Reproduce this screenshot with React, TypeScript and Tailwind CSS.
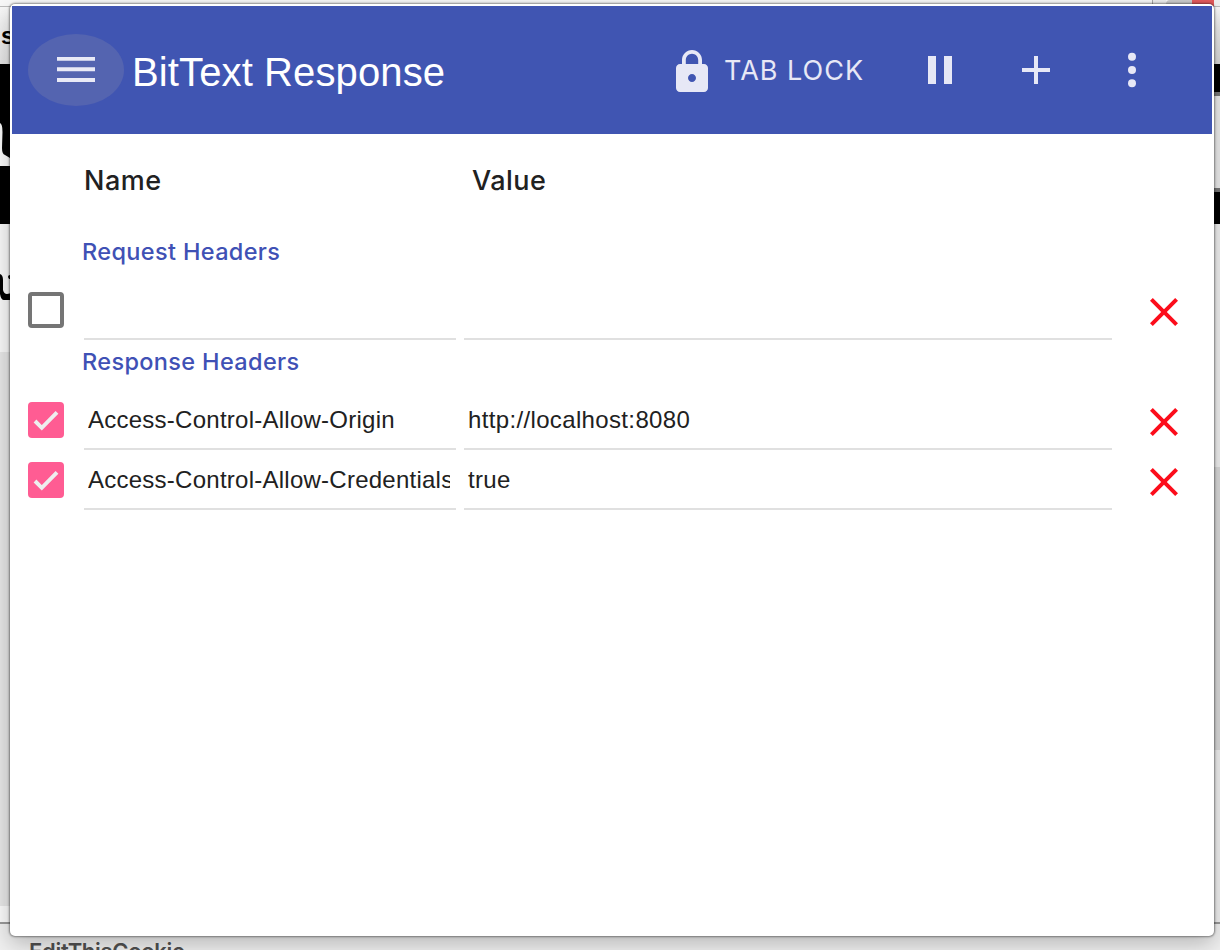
import type { ReactNode } from "react";

const response = [
  { name: "Access-Control-Allow-Origin", value: "http://localhost:8080" },
  { name: "Access-Control-Allow-Credentials", value: "true" },
];

function Backdrop() {
  return (
    <div className="flex h-full flex-col bg-[#e6e6e6]">
      <div className="flex h-[7px] shrink-0 justify-end border-b border-[#bdbdbd] bg-[#f8f8f8]">
        <div className="w-[14px] border-l border-[#a8a8a8] bg-[#eeeeee]" />
        <div className="w-[26px] rounded-tl bg-[#cccccc]" />
        <div className="w-[22px] bg-[#e25a5c]" />
        <div className="w-[6px] bg-[#f0f0f0]" />
      </div>
      <div className="flex flex-1 justify-between">
        <div className="flex w-5 flex-col">
          <div className="h-[57px] overflow-hidden bg-linear-to-b from-[#f8f8f8] to-[#e4e4e4] pl-px pt-[14px] font-['Liberation_Sans'] text-[24px] font-bold leading-[30px] text-black">
            s
          </div>
          <svg className="h-[160px] w-5" viewBox="0 0 20 160">
            <path d="M0 0H20V160H0Z" fill="#000" />
            <path d="M0 59Q2.500 60 2.500 68L2 84Q2 90 5 91L10 94H20V102H0Z" fill="#f8f8f8" />
          </svg>
          <svg className="h-[128px] w-5 bg-[#f8f8f8]" viewBox="0 0 20 128">
            <path d="M0 50Q3 51 3 56L3 66Q4 70 7 70L12 69V76H4Q1 76 0 70ZM8 53Q8 51 10 51H12V55H9Z" fill="#000" />
          </svg>
          <div className="h-[554px] bg-[#e6e6e6]" />
          <div className="flex-1 bg-[#fafafa]" />
        </div>
        <div className="flex w-5 flex-col">
          <div className="h-[57px] bg-linear-to-b from-[#f8f8f8] to-[#d8d8d8]" />
          <div className="h-7 bg-black" />
          <div className="h-1 bg-[#777777]" />
          <div className="h-[92px] bg-[#ececec]" />
          <div className="h-1 bg-[#777777]" />
          <div className="h-8 bg-black" />
          <div className="h-[243px] bg-[#f0f0f0]" />
          <div className="h-[283px] bg-[#dadada]" />
          <div className="flex-1 bg-[#f0f0f0]" />
        </div>
      </div>
      <div className="h-[28px] shrink-0 overflow-hidden border-t-2 border-[#999999] bg-[#f0f0f0] pl-[29px] pt-[13px] font-['Inter'] text-[22px] font-semibold leading-[28px] tracking-[-0.3px] text-[#505050]">
        EditThisCookie
      </div>
    </div>
  );
}

function IconButton({ label, children }: { label: string; children: ReactNode }) {
  return (
    <button aria-label={label} className="flex h-[72px] w-24 items-center justify-center rounded-[50%]">
      <svg className="size-12" viewBox="0 0 24 24" fill="#e7e8f6">
        {children}
      </svg>
    </button>
  );
}

function Header() {
  return (
    <header className="flex h-32 bg-[#4055b2] pl-4 pt-7">
      <button aria-label="Menu" className="flex h-[72px] w-24 items-center justify-center rounded-[50%] bg-[#5464b0]">
        <svg className="h-[26px] w-[38px]" viewBox="0 0 38 26" fill="#e9eaf6">
          <path d="M0 -.5H38V3.800H0ZM0 10.300H38V14.300H0ZM0 21H38V25H0Z" />
        </svg>
      </button>
      <h1 className="ml-2 mt-[15px] w-[528px] whitespace-nowrap font-['Liberation_Sans'] text-[40px] leading-[46px] tracking-[0.12px] text-white">
        BitText Response
      </h1>
      <button className="flex h-[72px] w-[232px] items-center pl-2 text-[#e7e8f6]">
        <svg className="mr-2 mt-[3px] size-12" viewBox="0 0 24 24" fill="currentColor">
          <path d="M18 8h-1V6c0-2.760-2.240-5-5-5S7 3.240 7 6v2H6c-1.100 0-2 .900-2 2v10c0 1.100.900 2 2 2h12c1.100 0 2-.900 2-2V10c0-1.100-.900-2-2-2zm-6 9c-1.100 0-2-.900-2-2s.900-2 2-2 2 .900 2 2-.900 2-2 2zm3.100-9H8.900V6c0-1.710 1.390-3.100 3.100-3.100 1.710 0 3.100 1.390 3.100 3.100v2z" />
        </svg>
        <span className="mt-0.5 whitespace-nowrap font-['Inter'] text-[27px] tracking-[1px]">TAB LOCK</span>
      </button>
      <IconButton label="Pause">
        <path d="M6 19h4V5H6v14zm8-14v14h4V5h-4z" />
      </IconButton>
      <IconButton label="Add">
        <path d="M19 13h-6v6h-2v-6H5v-2h6V5h2v6h6v2z" />
      </IconButton>
      <IconButton label="More">
        <circle cx="12" cy="5.350" r="2" />
        <circle cx="12" cy="12" r="2" />
        <circle cx="12" cy="18.650" r="2" />
      </IconButton>
    </header>
  );
}

function HeaderRow({ name, value, checked }: { name: string; value: string; checked: boolean }) {
  return (
    <div className="flex h-[60px] items-start pl-4 font-['Liberation_Sans'] text-[24px] tracking-[0.25px] text-[#212121]">
      {checked ? (
        <svg className="mt-[12px] size-9 rounded-[4px] bg-[#ff5c93]" viewBox="0 0 36 36" fill="none">
          <path d="M7 19L13.800 25.800L29 10.300" stroke="#eeeeee" strokeWidth="3.900" />
        </svg>
      ) : (
        <div className="mt-[12px] size-9 rounded-[4px] border-4 border-[#757575]" />
      )}
      <div className="ml-5 h-[60px] w-[372px] border-b-2 border-[#e0e0e0] px-1">
        <div className="w-[362px] overflow-hidden whitespace-nowrap leading-[60px]">{name}</div>
      </div>
      <div className="ml-2 h-[60px] w-[648px] border-b-2 border-[#e0e0e0] px-1 leading-[60px] tracking-[0.35px]">{value}</div>
      <svg className="ml-7 mt-2 size-12" viewBox="0 0 24 24" fill="#fc0d1b">
        <path d="M19 6.410L17.590 5 12 10.590 6.410 5 5 6.410 10.590 12 5 17.590 6.410 19 12 13.410 17.590 19 19 17.590 13.410 12z" />
      </svg>
    </div>
  );
}

function SectionTitle({ children }: { children: ReactNode }) {
  return (
    <h2 className="h-[50px] pl-[70px] pt-[5px] font-['Inter'] text-[23.5px] font-medium leading-[34px] tracking-[0.35px] text-[#3f51b5]">
      {children}
    </h2>
  );
}

export default function App() {
  return (
    <div className="relative h-[950px] w-[1220px] overflow-hidden">
      <Backdrop />
      <main className="absolute left-[10px] top-[4px] h-[932px] w-[1204px] rounded-[5px] bg-white p-[2px] shadow-[0_0_2px_1px_rgba(0,0,0,0.4),0_8px_22px_rgba(0,0,0,0.24)]">
        <Header />
        <div className="flex h-24 pl-[72px] pt-[29px] font-['Inter'] text-[27px] font-medium leading-[36px] tracking-[0.5px] text-[#212121]">
          <div className="w-[388px]">Name</div>
          <div>Value</div>
        </div>
        <SectionTitle>Request Headers</SectionTitle>
        <HeaderRow name="" value="" checked={false} />
        <SectionTitle>Response Headers</SectionTitle>
        {response.map((row) => (
          <HeaderRow key={row.name} name={row.name} value={row.value} checked />
        ))}
      </main>
    </div>
  );
}
